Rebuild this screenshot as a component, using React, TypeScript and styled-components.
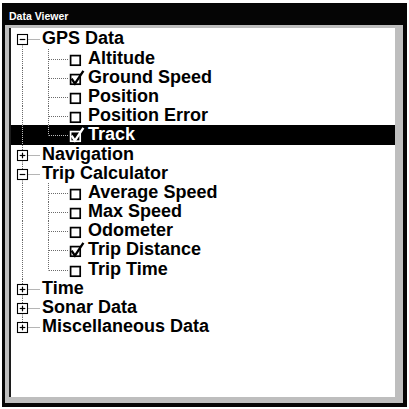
import React from 'react';
import styled, { createGlobalStyle } from 'styled-components';

const GlobalStyle = createGlobalStyle`
  html, body {
    margin: 0;
    background: #ffffff;
  }
  body {
    font-family: "Liberation Sans", Arial, sans-serif;
  }
`;

const Screen = styled.div`
  width: 409px;
  height: 409px;
  padding: 3px 0 0 2px;
  box-sizing: border-box;
`;

const Window = styled.div`
  width: 405px;
  height: 404px;
  box-sizing: border-box;
  background: #050505;
  padding: 0 4px 4px 3px;
  display: flex;
  flex-direction: column;
`;

const TitleBar = styled.div`
  height: 22px;
  box-sizing: border-box;
  padding: 5px 0 0 4px;
  line-height: 17px;
  font-size: 10.5px;
  font-weight: bold;
  color: #ffffff;
`;

const Panel = styled.div`
  flex: 1;
  display: flex;
  background: #bebebe;
  padding: 3px 8px 6px 4px;
`;

const Tree = styled.div`
  flex: 1;
  background: #ffffff;
  border-left: 2px solid #1c1c1c;
  padding-top: 1.4px;
  display: flex;
  flex-direction: column;
`;

const Row = styled.div<{ $selected?: boolean }>`
  height: 19.2px;
  display: flex;
  align-items: flex-start;
  background: ${(p) => (p.$selected ? '#000000' : 'transparent')};
  color: ${(p) => (p.$selected ? '#ffffff' : '#000000')};
  font-size: 18px;
  font-weight: bold;
  line-height: 19.2px;
  white-space: nowrap;
`;

const Label = styled.span`
  display: block;
`;

type Child = { label: string; checked: boolean; selected?: boolean };
type Node = { label: string; open?: boolean; children?: Child[] };

const tree: Node[] = [
  {
    label: 'GPS Data',
    open: true,
    children: [
      { label: 'Altitude', checked: false },
      { label: 'Ground Speed', checked: true },
      { label: 'Position', checked: false },
      { label: 'Position Error', checked: false },
      { label: 'Track', checked: true, selected: true },
    ],
  },
  { label: 'Navigation' },
  {
    label: 'Trip Calculator',
    open: true,
    children: [
      { label: 'Average Speed', checked: false },
      { label: 'Max Speed', checked: false },
      { label: 'Odometer', checked: false },
      { label: 'Trip Distance', checked: true },
      { label: 'Trip Time', checked: false },
    ],
  },
  { label: 'Time' },
  { label: 'Sonar Data' },
  { label: 'Miscellaneous Data' },
];

const H = 19.2;
const CY = 10.5;
const ROOT_X = 11.5;
const CHILD_X = 37.5;

const RootGuides = ({ first, last, open, selected }: { first: boolean; last: boolean; open?: boolean; selected?: boolean }) => {
  const dots = selected ? '#bbbbbb' : '#6a6a6a';
  const ink = selected ? '#ffffff' : '#000000';
  return (
    <svg width={31} height={H} style={{ flexShrink: 0 }}>
      {!first && <line x1={ROOT_X} y1={0} x2={ROOT_X} y2={CY - 5} stroke={dots} strokeDasharray="1 1" />}
      {!last && <line x1={ROOT_X} y1={CY + 5} x2={ROOT_X} y2={H} stroke={dots} strokeDasharray="1 1" />}
      <line x1={16.5} y1={CY} x2={29} y2={CY} stroke={dots} strokeDasharray="1 1" />
      <rect x={6.5} y={CY - 5} width={10} height={10} fill="none" stroke={ink} strokeWidth={1.1} />
      <line x1={8.7} y1={CY} x2={14.3} y2={CY} stroke={ink} strokeWidth={1.2} />
      {!open && <line x1={11.5} y1={CY - 2.8} x2={11.5} y2={CY + 2.8} stroke={ink} strokeWidth={1.2} />}
    </svg>
  );
};

const ChildGuides = ({ last, checked, selected }: { last: boolean; checked: boolean; selected?: boolean }) => {
  const dots = selected ? '#bbbbbb' : '#6a6a6a';
  const ink = selected ? '#ffffff' : '#000000';
  return (
    <svg width={77} height={H} style={{ flexShrink: 0 }}>
      <line x1={ROOT_X} y1={0} x2={ROOT_X} y2={H} stroke={dots} strokeDasharray="1 1" />
      <line x1={CHILD_X} y1={0} x2={CHILD_X} y2={last ? CY : H} stroke={dots} strokeDasharray="1 1" />
      <line x1={38} y1={CY} x2={57} y2={CY} stroke={dots} strokeDasharray="1 1" />
      <rect x={59.6} y={6.6} width={9.6} height={9.6} fill="none" stroke={ink} strokeWidth={1.7} />
      {checked && (
        <path d="M60.6 10.6 L63.9 15.6 L72.4 2.8" fill="none" stroke={ink} strokeWidth={2.3} strokeLinejoin="miter" />
      )}
    </svg>
  );
};

export default function App() {
  return (
    <>
      <GlobalStyle />
      <Screen>
        <Window>
          <TitleBar>Data Viewer</TitleBar>
          <Panel>
            <Tree>
              {tree.map((node, i) => (
                <React.Fragment key={node.label}>
                  <Row>
                    <RootGuides first={i === 0} last={i === tree.length - 1} open={node.open} />
                    <Label>{node.label}</Label>
                  </Row>
                  {node.open &&
                    node.children?.map((child, j) => (
                      <Row key={child.label} $selected={child.selected}>
                        <ChildGuides
                          last={j === (node.children?.length ?? 0) - 1}
                          checked={child.checked}
                          selected={child.selected}
                        />
                        <Label>{child.label}</Label>
                      </Row>
                    ))}
                </React.Fragment>
              ))}
            </Tree>
          </Panel>
        </Window>
      </Screen>
    </>
  );
}
